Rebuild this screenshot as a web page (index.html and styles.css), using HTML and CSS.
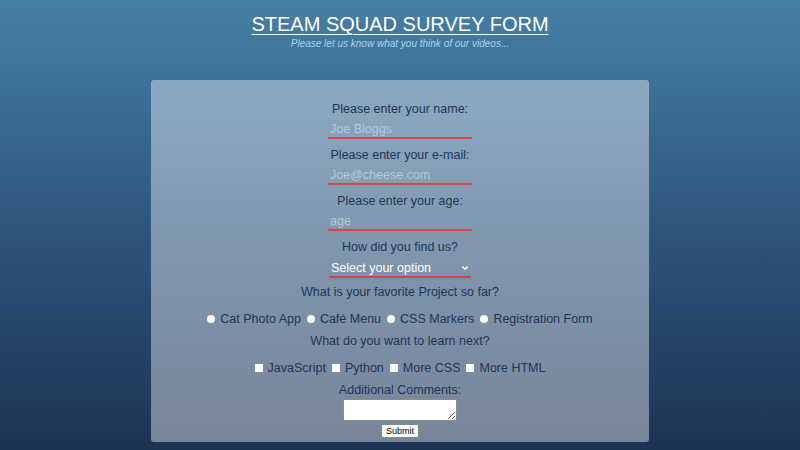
FILE: index.html
```html
<!DOCTYPE html>
<html>
<head>
<meta charset="utf-8">
<link rel="stylesheet" href="styles.css">
</head>
<body>
<header class="head">
  <h1 class="title">STEAM SQUAD SURVEY FORM</h1>
  <p class="sub">Please let us know what you think of our videos...</p>
</header>
<form class="card">
  <div class="group">
    <label class="lbl">Please enter your name:</label>
    <input class="field" type="text" placeholder="Joe Bloggs">
  </div>
  <div class="group">
    <label class="lbl">Please enter your e-mail:</label>
    <input class="field" type="email" placeholder="Joe@cheese.com">
  </div>
  <div class="group">
    <label class="lbl">Please enter your age:</label>
    <input class="field" type="number" placeholder="age">
  </div>
  <div class="group sel">
    <label class="lbl">How did you find us?</label>
    <div class="selwrap">
      <span class="seltext">Select your option</span>
      <svg class="chev" width="8" height="6" viewBox="0 0 8 6"><path d="M1.2 1.5 L4 4.3 L6.8 1.5" fill="none" stroke="#fff" stroke-width="1.5"/></svg>
    </div>
  </div>
  <div class="group">
    <label class="lbl">What is your favorite Project so far?</label>
    <div class="opts">
      <span class="opt"><span class="radio"></span>Cat Photo App</span>
      <span class="opt"><span class="radio"></span>Café Menu</span>
      <span class="opt"><span class="radio"></span>CSS Markers</span>
      <span class="opt"><span class="radio"></span>Registration Form</span>
    </div>
  </div>
  <div class="group">
    <label class="lbl">What do you want to learn next?</label>
    <div class="opts">
      <span class="opt"><span class="check"></span>JavaScript</span>
      <span class="opt"><span class="check"></span>Python</span>
      <span class="opt"><span class="check"></span>More CSS</span>
      <span class="opt"><span class="check"></span>More HTML</span>
    </div>
  </div>
  <div class="group last">
    <label class="lbl">Additional Comments:</label>
    <textarea class="ta"></textarea>
    <button class="btn" type="button">Submit</button>
  </div>
</form>
</body>
</html>
```
FILE: styles.css
```css
html, body {
  margin: 0;
  padding: 0;
}
body {
  width: 800px;
  height: 450px;
  overflow: hidden;
  background: linear-gradient(to bottom, #477fa4 0%, #3a6b92 25%, #2a4e75 60%, #1d3354 100%);
  font-family: "Liberation Sans", Arial, sans-serif;
  color: #1f3556;
}
.head {
  text-align: center;
  padding-top: 12px;
}
.title {
  margin: 0;
  font-size: 20px;
  font-weight: normal;
  color: #fff;
  text-decoration: underline;
  text-decoration-thickness: 1px;
  text-underline-offset: 3px;
  line-height: 24px;
}
.sub {
  margin: 0;
  font-size: 10px;
  font-style: italic;
  color: #a9d3ee;
  line-height: 15px;
}
.card {
  width: 498px;
  margin: 29px auto 0;
  box-sizing: border-box;
  background: rgba(255, 255, 255, 0.4);
  border-radius: 3px;
  padding: 20px 0 4px;
  display: flex;
  flex-direction: column;
  align-items: center;
  height: 362px;
}
.group {
  display: flex;
  flex-direction: column;
  align-items: center;
  margin-bottom: 7px;
}
.group.sel {
  margin-bottom: 5px;
}
.lbl {
  font-size: 12.5px;
  line-height: 18px;
  color: #1f3556;
}
.field {
  margin-top: 3px;
  width: 144px;
  height: 18px;
  box-sizing: border-box;
  background: transparent;
  border: none;
  border-bottom: 2px solid #d6434f;
  padding: 0 2px;
  font-family: "Liberation Sans", Arial, sans-serif;
  font-size: 12.5px;
  color: #fff;
  outline: none;
  -moz-appearance: textfield;
}
.field::placeholder {
  color: #b6c9d6;
}
.selwrap {
  margin-top: 4px;
  width: 142px;
  height: 18px;
  box-sizing: border-box;
  border-bottom: 2px solid #d6434f;
  display: flex;
  align-items: center;
  justify-content: space-between;
  padding: 0 2px 0 2px;
}
.seltext {
  color: #fff;
  font-size: 12.5px;
  line-height: 16px;
}
.chev {
  display: block;
}
.opts {
  display: flex;
  gap: 6px;
  margin-top: 9px;
  margin-bottom: -3px;
}
.opt {
  display: flex;
  align-items: center;
  font-size: 12.5px;
  line-height: 18px;
  color: #1f3556;
}
.radio {
  width: 8px;
  height: 8px;
  border-radius: 50%;
  background: #fff;
  margin-right: 5px;
}
.check {
  width: 8px;
  height: 8px;
  background: #fff;
  margin-right: 5px;
}
.last {
  margin-bottom: 0;
}
.ta {
  margin: 0;
  width: 114px;
  height: 22px;
  box-sizing: border-box;
  border: 1px solid #8a8a8a;
  background: #fff;
  resize: vertical;
  display: block;
}
.btn {
  margin-top: 3px;
  font-family: "Liberation Sans", Arial, sans-serif;
  font-size: 9px;
  padding: 1px 4px;
  background: #fff;
  border: 1px solid #888;
  border-radius: 2px;
  color: #000;
  line-height: 10px;
}
```
